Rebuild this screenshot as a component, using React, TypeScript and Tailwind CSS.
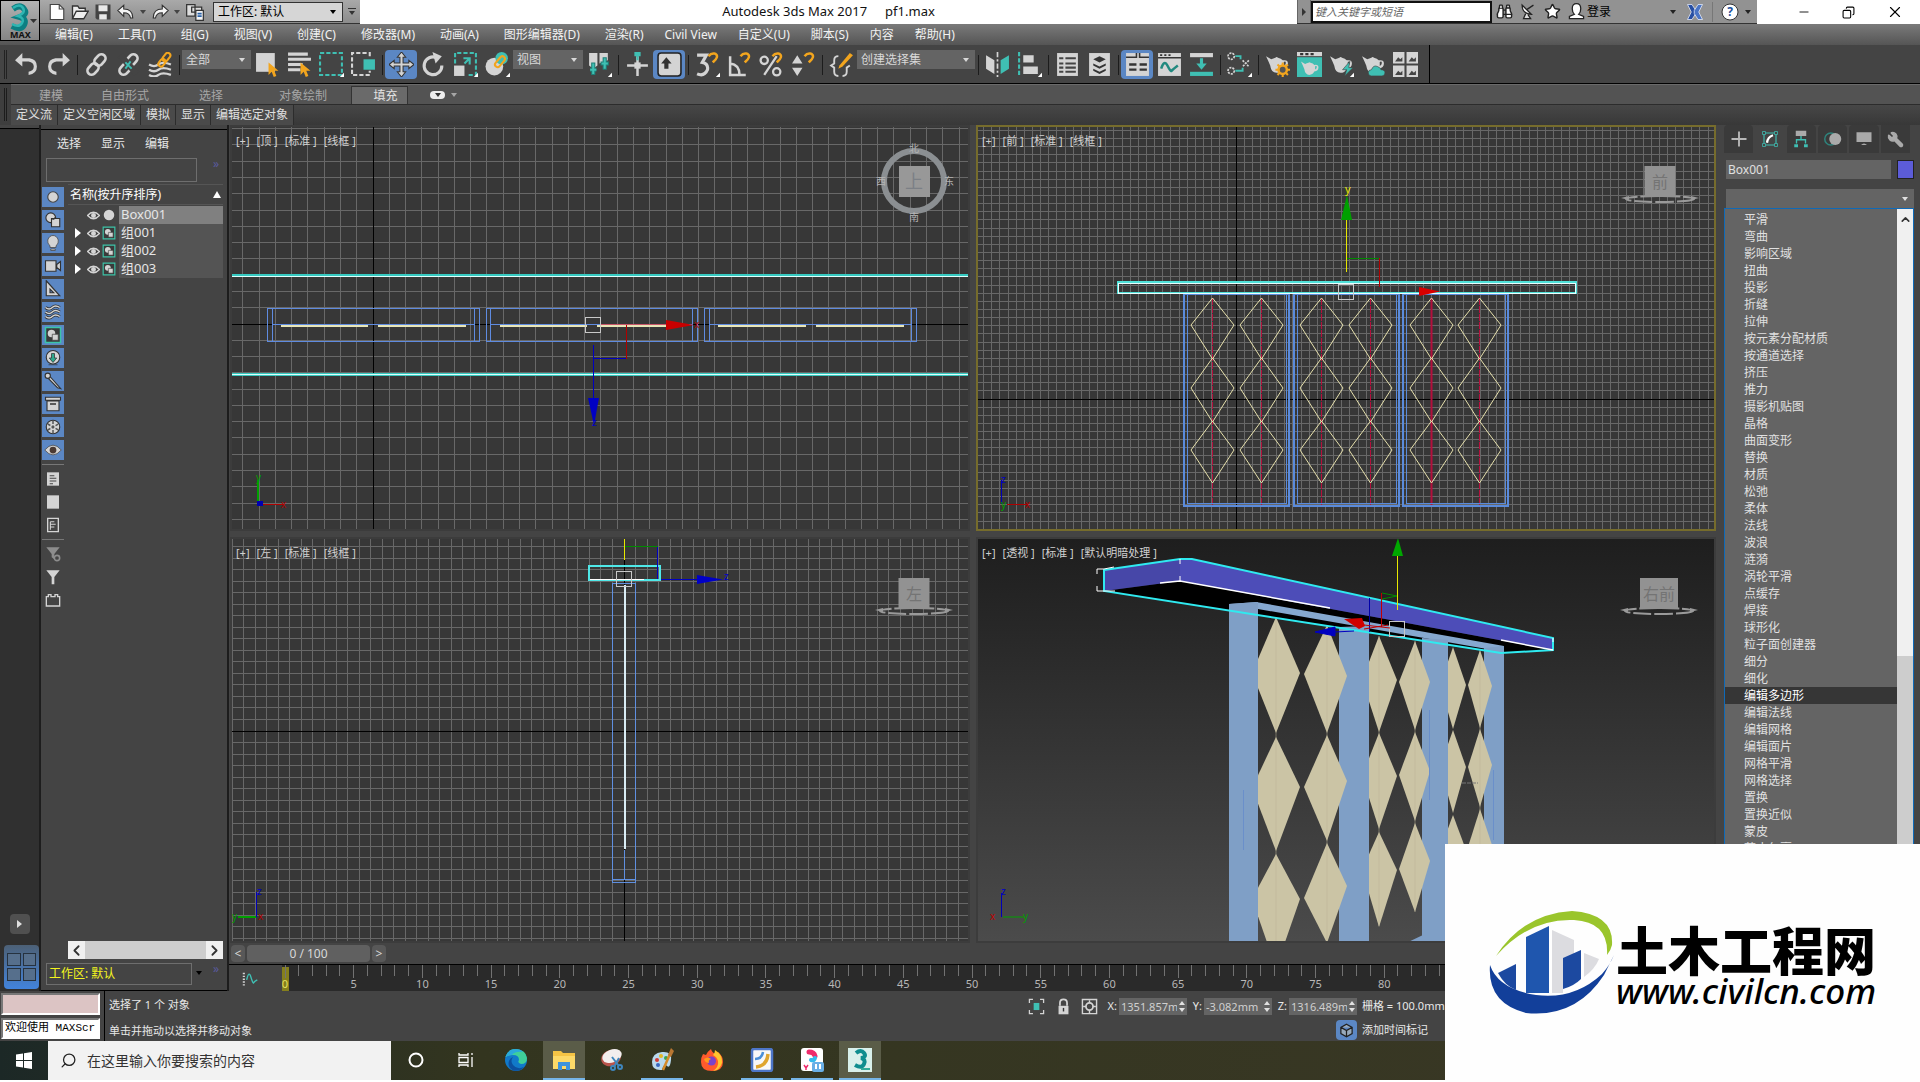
import type { ReactNode } from "react";
import {
  Binoculars,
  ChevronLeft,
  ChevronRight,
  ChevronUp,
  Copy,
  Minus,
  Search,
  Star,
  Wrench,
  X,
} from "lucide-react";

const L = "#d4d4d4";
const T = "#3fbfb3";
const Y = "#f2a51e";

function Ico({ children, size = 26 }: { children: ReactNode; size?: number }) {
  return (
    <svg width={size} height={size} viewBox="0 0 24 24" fill="none" aria-hidden="true" className="shrink-0">
      {children}
    </svg>
  );
}

// Small triangle in the corner of tools that open a flyout
const fly = <path d="M24 20v4h-4z" fill="#fff" />;
const magnet = <path d="M13 4c3-4 9-3 8 1-.5 2-3 4-4 5" stroke={Y} strokeWidth="2.4" />;
const cursor = <path d="M13 10v12l3-3 2 5 2.500-1-2-5h4z" fill={Y} />;
const teapot = (
  <path
    d="M1 4l5 3q2-1 4-1.500q1-1.500 2.500 0q3 .5 4.500 2.500q5-1 5 3q0 4-5 5q-2 4-6 4q-5 0-6-7q-2-5-4-9zM18 9.500v4q2-1 2-3t-2-1z"
    fill={L}
    fillRule="evenodd"
  />
);
const link = (
  <g stroke={L} strokeWidth="2.600">
    <rect x="11" y="1.500" width="8" height="12" rx="4" transform="rotate(42 15 8)" />
    <rect x="5" y="10.500" width="8" height="12" rx="4" transform="rotate(42 9 16)" />
  </g>
);

const tools: Record<string, ReactNode> = {
  undo: <path d="M8 1v5h7q7 1 7 8t-8 8v-3q5-1 5-5t-5-5H8v5L1 8z" fill={L} />,
  redo: <path d="M16 1v5H9q-7 1-7 8t8 8v-3q-5-1-5-5t5-5h6v5l7-6z" fill={L} />,
  link,
  unlink: (
    <>
      {link}
      <path d="M4 3l16 18" stroke="#444" strokeWidth="6" />
      <path d="M9 10l6 6M9 16l5-7" stroke={T} strokeWidth="1.800" />
    </>
  ),
  bind: (
    <>
      <path d="M1 12q5 3 9 0t12 0M1 17q5 3 9 0t12 0M1 22q5 3 9 0t12 0" stroke={L} strokeWidth="2.200" />
      <g stroke={Y} strokeWidth="2">
        <rect x="15" y="0" width="5" height="9" rx="2.500" transform="rotate(38 17 5)" />
        <rect x="11" y="6" width="5" height="8" rx="2.500" transform="rotate(38 13 10)" />
      </g>
    </>
  ),
  pick: (
    <>
      <path d="M1 1h18v18H1z" fill={L} />
      {cursor}
    </>
  ),
  pickName: (
    <>
      <path d="M1 2h19M1 7h22M1 12h14M1 17h12" stroke={L} strokeWidth="3" />
      {cursor}
    </>
  ),
  region: (
    <>
      <path d="M1 1h21v21H1z" stroke={T} strokeWidth="2" strokeDasharray="4 2" />
      {fly}
    </>
  ),
  crossing: (
    <>
      <path d="M18 4V1H1v21h17v-4" stroke={L} strokeWidth="2" strokeDasharray="4 2" />
      <path d="M12 7h11v10H12z" fill={T} />
    </>
  ),
  move: <path d="M12 0l4 5h-2.500v5.500H19V8l5 4-5 4v-2.500h-5.500V19H16l-4 5-4-5h2.500v-5.500H5V16l-5-4 5-4v2.500h5.500V5H8z" fill={L} stroke="#333" />,
  rotate: (
    <>
      <path d="M15 5.500A8.500 8.500 0 1 0 20 13" stroke={L} strokeWidth="3" />
      <path d="M11 0l9 4-6 7z" fill={L} />
    </>
  ),
  scale: (
    <>
      <path d="M2 11V1h20v21h-9" stroke={T} strokeWidth="2" strokeDasharray="4 2" />
      <path d="M1 13h10v10H1z" fill={L} />
      <path d="M10 6h6v6M16 6l-5 5" stroke={T} strokeWidth="2" />
      {fly}
    </>
  ),
  place: (
    <>
      <circle cx="9" cy="14" r="8.500" fill={L} />
      <circle cx="16" cy="6" r="6" fill={T} />
      <rect x="12" y="3" width="5" height="12" rx="2.500" transform="rotate(40 14 9)" stroke={Y} strokeWidth="2" />
      {fly}
    </>
  ),
  pivot: (
    <>
      <path d="M2 1h8v12l-4 3-4-3zM12 1h8v7l-8 3z" fill={L} />
      <path d="M6 10v12M3 17h6M17 5v12M13 11h8" stroke="#1f7f78" strokeWidth="4" />
      <path d="M6 11v10M3 17h6M17 6v10M14 11h6" stroke={T} strokeWidth="2" />
      {fly}
    </>
  ),
  manipulate: (
    <>
      <path d="M12 4v19M2 13h20" stroke={L} strokeWidth="2.400" />
      <path d="M9 10h6v6H9z" fill={L} />
      <path d="M9 0h6v4h-2v4h-2V4H9z" fill={T} />
    </>
  ),
  keyboard: (
    <>
      <rect x="1" y="1" width="22" height="22" rx="3" fill={L} stroke="#222" strokeWidth="1.500" />
      <path d="M9 5l5 6h-3v5H7v-5H4z" fill="#333" />
    </>
  ),
  snap3: (
    <>
      <path d="M2 3h9L7 10q6 1 5 7-3 7-10 4" stroke={L} strokeWidth="3" />
      {magnet}
      {fly}
    </>
  ),
  snapAngle: (
    <>
      <path d="M3 4v18h15M3 11q9 1 9 11" stroke={L} strokeWidth="2.400" />
      {magnet}
    </>
  ),
  snapPercent: (
    <>
      <circle cx="5" cy="8" r="3.500" stroke={L} strokeWidth="2.200" />
      <circle cx="17" cy="19" r="3.500" stroke={L} strokeWidth="2.200" />
      <path d="M17 4L5 22" stroke={L} strokeWidth="2.200" />
      {magnet}
    </>
  ),
  snapSpinner: (
    <>
      <path d="M6 3l5 8H1zM6 23l5-8H1z" fill={L} />
      {magnet}
    </>
  ),
  sets: (
    <>
      <path d="M9 4Q5 4 5 8v3l-3 2 3 2v4q0 4 4 4M13 23q4 0 4-4v-4l3-2" stroke={L} strokeWidth="1.800" />
      <path d="M10 13L20 1l3 2-10 11-4 2z" fill={Y} />
    </>
  ),
  mirror: (
    <>
      <path d="M1 3l8 5v13l-8-5z" fill={L} />
      <path d="M12 0v24" stroke={L} strokeWidth="1.600" strokeDasharray="5 2 2 2" />
      <path d="M23 3l-8 5v13l8-5z" fill={T} />
    </>
  ),
  align: (
    <>
      <path d="M2 0v24" stroke={T} strokeWidth="2" strokeDasharray="4 2" />
      <path d="M6 3h10v7H6zM6 14h14v7H6z" fill={L} />
      {fly}
    </>
  ),
  layerList: (
    <>
      <path d="M2 1h20v22H2z" fill={L} />
      <path d="M4 6h4M10 6h10M4 11h4M10 11h10M4 15h4M10 15h10M4 19h4M10 19h10" stroke="#444" strokeWidth="2" />
    </>
  ),
  layers: (
    <>
      <path d="M2 1h20v22H2z" fill={L} />
      <path d="M12 4l6 3-6 3-6-3zM6 11l6 3 6-3v2l-6 3-6-3zM6 16l6 3 6-3v2l-6 3-6-3z" fill="#333" />
    </>
  ),
  ribbon: (
    <>
      <path d="M1 1h22v22H1z" fill={L} />
      <path d="M1 5h10V1M14 1v4h9" stroke="#333" strokeWidth="1.500" />
      <path d="M4 12h7M14 12h7M4 17h7M14 17h7" stroke="#333" strokeWidth="2.200" />
    </>
  ),
  curve: (
    <>
      <path d="M1 1h22v22H1z" fill={L} />
      <path d="M1 5.500h22M3 3h2M7 3h2M11 3h2" stroke="#333" strokeWidth="1.500" />
      <path d="M4 16q3-9 6-3t4 5 6-5" stroke="#21897f" strokeWidth="2.400" />
    </>
  ),
  schematic: (
    <>
      <path d="M1 1h22v4H1z" fill={L} />
      <path d="M1 19h22v4H1z" fill={T} />
      <path d="M12 6v6" stroke={T} strokeWidth="3" />
      <path d="M7 11h10l-5 6z" fill={T} />
    </>
  ),
  material: (
    <>
      <g stroke={L} strokeWidth="1.600" strokeDasharray="2 1">
        <circle cx="4" cy="4" r="3" />
        <circle cx="4" cy="18" r="3" />
        <path d="M15 8l6 6M21 8l-6 6" />
      </g>
      <path d="M8 4h5v3M8 18h7v-3" stroke={T} strokeWidth="1.800" />
      {fly}
    </>
  ),
  renderSetup: (
    <>
      {teapot}
      <circle cx="17" cy="17" r="4" fill="#555" stroke={Y} strokeWidth="2.400" />
      <path d="M17 10v3M17 21v3M10 17h3M21 17h3M12 12l2 2M20 20l2 2M22 12l-2 2M14 20l-2 2" stroke={Y} strokeWidth="2" />
    </>
  ),
  frame: (
    <>
      <path d="M0 0h24v4H0z" fill={L} />
      <path d="M3 2h3M8 2h3M13 2h3" stroke="#333" strokeWidth="2" />
      <path d="M0 5h24v19H0z" fill={T} />
      <g transform="translate(3 6) scale(.8)">{teapot}</g>
    </>
  ),
  render: (
    <>
      {teapot}
      <path d="M20 9l-7 8h4l-2 6 8-8h-4z" fill={T} stroke="#444" strokeWidth=".6" />
      {fly}
    </>
  ),
  cloud: (
    <>
      {teapot}
      <path d="M10 23q-3 0-3-3t3-3q2-5 6-3t3 3q4 0 4 3t-3 3z" fill={T} stroke="#444" strokeWidth=".6" />
    </>
  ),
  gallery: (
    <>
      <path d="M0 0h11v11H0zM13 0h11v11H13zM0 13h11v11H0zM13 13h11v11H13z" fill={L} />
      <path d="M2 9l3-4 2 2 2-2v4zM15 9l3-4 2 2 2-2v4zM2 22l3-4 2 2 2-2v4zM15 22l3-4 2 2 2-2v4z" fill="#444" />
    </>
  ),
};

function Tool({ name, label, on }: { name: string; label: string; on?: boolean }) {
  return (
    <button
      type="button"
      title={label}
      aria-label={label}
      className={`flex h-[29px] w-8 shrink-0 items-center justify-center rounded-sm ${on ? "bg-[#5b87c4]" : ""}`}
    >
      <Ico size={25}>{tools[name]}</Ico>
    </button>
  );
}

function Sep() {
  return (
    <div className="flex h-[29px] w-1.5 shrink-0 items-center justify-center">
      <div className="h-5 w-px bg-[#1c1c1c]" />
    </div>
  );
}

function Caret({ className = "" }: { className?: string }) {
  return (
    <svg width="6" height="4" viewBox="0 0 6 4" className={`pointer-events-none shrink-0 ${className}`} aria-hidden="true">
      <path d="M0 0h6L3 4z" fill="currentColor" />
    </svg>
  );
}

function Combo({ label, value, className }: { label: string; value: string; className: string }) {
  return (
    <div className={`relative shrink-0 ${className}`}>
      <select aria-label={label} className="h-full w-full appearance-none bg-transparent px-1 outline-none">
        <option>{value}</option>
      </select>
      <Caret className="absolute top-1/2 right-1.5 -translate-y-1/2" />
    </div>
  );
}

const mainMenu = [
  ["编辑(E)", "工具(T)", "组(G)", "视图(V)", "创建(C)", "修改器(M)", "动画(A)", "图形编辑器(D)", "渲染(R)"],
  ["Civil View", "自定义(U)", "脚本(S)", "内容", "帮助(H)"],
];

function Header() {
  return (
    <header className="flex bg-gradient-to-b from-[#a8a8a8] to-[#555]">
      <button
        type="button"
        aria-label="应用程序菜单"
        className="relative z-10 h-[41px] w-10 shrink-0 border border-black bg-gradient-to-b from-[#b4b4b4] to-[#858585]"
      >
        <svg width="38" height="39" viewBox="0 0 38 39" aria-hidden="true">
          <path d="M12 8q7-5 11 0t-4 8q7 2 4 8t-12 1" fill="none" stroke="#0c7f82" strokeWidth="6" />
          <path d="M12 7q7-5 10 0t-5 8q7 2 4 7t-10 1" fill="none" stroke="#2fb5b2" strokeWidth="2.500" />
          <path d="M29 18h7l-3.500 4z" fill="#333" />
          <text x="9" y="37" fontSize="9" fontWeight="700" fill="#111">MAX</text>
        </svg>
      </button>

      <div className="min-w-0 flex-1">
        <div className="flex h-6 bg-white text-[#222]">
          <div className="flex w-80 shrink-0 items-center border-b border-[#333] bg-gradient-to-b from-[#a9a9a9] to-[#8c8c8c]">
            <div className="flex flex-1 items-center justify-between px-2 text-[#444]">
              <Ico size={18}>
                <path d="M3 2h12l6 6v14H3z" fill="#fff" stroke="#444" strokeWidth="1.500" />
                <path d="M15 2v6h6" stroke="#444" strokeWidth="1.500" />
              </Ico>
              <Ico size={18}>
                <path d="M2 21V4h7l2 3h8v4M2 21l5-10h16l-6 10z" fill="#eee" stroke="#333" strokeWidth="1.800" />
              </Ico>
              <Ico size={18}>
                <path d="M2 2h20v20H4l-2-2z" fill="#444" />
                <path d="M6 3h12v8H6zM7 15h10v7H7z" fill="#e8e8e8" />
              </Ico>
              <Ico size={18}>
                <path d="M9 3v5q12 0 12 12h-3q-1-7-9-7v5L1 10z" fill="#f4f4f4" stroke="#333" strokeWidth="1.500" />
              </Ico>
              <Caret />
              <Ico size={18}>
                <path d="M15 3v5Q3 8 3 20h3q1-7 9-7v5l8-8z" fill="#f4f4f4" stroke="#333" strokeWidth="1.500" />
              </Ico>
              <Caret />
              <Ico size={20}>
                <path d="M2 3h10v14H2zM8 6h12v6H8z" fill="#ddd" stroke="#333" strokeWidth="1.500" />
                <path d="M13 10h9v12h-9z" fill="#f4f4f4" stroke="#333" strokeWidth="1.500" />
                <path d="M15 14h5M15 17h5" stroke="#2a62a8" strokeWidth="2" />
              </Ico>
            </div>
            <Combo
              label="工作区"
              value="工作区: 默认"
              className="h-5 w-[130px] border border-[#333] bg-[#d6d6d6] text-xs text-black"
            />
            <div className="flex w-[17px] flex-col items-center gap-0.5 text-[#333]">
              <div className="h-px w-2 bg-[#333]" />
              <Caret />
            </div>
          </div>

          <h1 className="flex flex-1 items-center justify-center gap-[18px] text-[13px] text-[#111]">
            <span>Autodesk 3ds Max 2017</span>
            <span>pf1.max</span>
          </h1>

          <div className="flex w-[460px] shrink-0 items-center border-b border-[#333] bg-[#929292] text-xs">
            <div className="flex h-full w-3.5 items-center justify-center border-x border-[#666]">
              <span className="border-y-4 border-l-4 border-y-transparent border-l-[#333]" />
            </div>
            <input
              aria-label="搜索"
              placeholder="键入关键字或短语"
              className="h-[22px] w-[181px] border-2 border-[#111] bg-white px-0.5 text-[11px] italic outline-none placeholder:text-[#666]"
            />
            <div className="flex items-center gap-[7px] pl-1">
              <Binoculars size={17} className="fill-white text-[#222]" strokeWidth={2} />
              <Ico size={17}>
                <path d="M3 3q0 12 13 13z" fill="#fff" stroke="#222" strokeWidth="1.800" />
                <path d="M10 9l9-6M8 15l-3 7h10l-4-6" fill="#ddd" stroke="#222" strokeWidth="1.800" />
              </Ico>
              <Star size={17} className="fill-white text-[#222]" strokeWidth={2} />
              <Ico size={17}>
                <path d="M12 1q6 0 6 7 0 5-3 8l7 3v3H2v-3l7-3q-3-3-3-8 0-7 6-7z" fill="#fff" stroke="#222" strokeWidth="1.800" />
              </Ico>
            </div>
            <button type="button" className="ml-0.5 text-black">登录</button>
            <Caret className="ml-auto" />
            <svg width="18" height="18" viewBox="0 0 24 24" className="ml-2.5 mr-2" aria-hidden="true">
              <path d="M2 2h6l5 8v4l-5 8H2l5-10z" fill="#274fa3" stroke="#e8eefc" />
              <path d="M22 2h-6l-5 8v4l5 8h6l-5-10z" fill="#4a74c4" stroke="#e8eefc" />
            </svg>
            <div className="h-5 w-px bg-[#777]" />
            <svg width="18" height="18" viewBox="0 0 18 18" className="ml-2" aria-label="帮助">
              <circle cx="9" cy="9" r="8" fill="#fff" stroke="#333" />
              <text x="9" y="13" fontSize="12" fontWeight="700" textAnchor="middle" fill="#1d4f9c">?</text>
            </svg>
            <Caret className="mx-1.5" />
          </div>

          <div className="flex w-[163px] shrink-0 items-center justify-around pl-6 text-black">
            <button type="button" aria-label="最小化"><Minus size={14} strokeWidth={1.5} /></button>
            <button type="button" aria-label="还原"><Copy size={13} strokeWidth={2} className="-scale-x-100" /></button>
            <button type="button" aria-label="关闭"><X size={18} strokeWidth={1.5} /></button>
          </div>
        </div>

        <nav className="flex h-[21px] items-center gap-[21px] pl-[15px] text-xs text-[#f2f2f2]">
          <div className="flex gap-[25px]">
            {mainMenu[0].map((m) => <button key={m} type="button">{m}</button>)}
          </div>
          <div className="flex gap-[21px]">
            {mainMenu[1].map((m) => <button key={m} type="button">{m}</button>)}
          </div>
        </nav>
      </div>
    </header>
  );
}

function Toolbar() {
  return (
    <div className="flex h-[39px] border-b border-black bg-[#444] text-xs text-[#d8d8d8]">
      <div className="flex items-start border-r border-black pt-[5px] pr-2 pl-1">
        <div className="mr-[3px] h-[29px] w-[3px] border-x border-[#222]" />
        <Tool name="undo" label="撤消" />
        <Tool name="redo" label="重做" />
        <Sep />
        <Tool name="link" label="链接" />
        <Tool name="unlink" label="断开链接" />
        <Tool name="bind" label="绑定到空间扭曲" />
        <Sep />
        <Combo label="选择过滤器" value="全部" className="h-[19px] w-[69px] bg-[#646464]" />
        <Tool name="pick" label="选择对象" />
        <Tool name="pickName" label="按名称选择" />
        <Tool name="region" label="矩形选择区域" />
        <Tool name="crossing" label="窗口/交叉" />
        <Sep />
        <Tool name="move" label="选择并移动" on />
        <Tool name="rotate" label="选择并旋转" />
        <Tool name="scale" label="选择并缩放" />
        <Tool name="place" label="选择并放置" />
        <Combo label="参考坐标系" value="视图" className="h-[19px] w-[70px] bg-[#646464]" />
        <Tool name="pivot" label="使用轴点中心" />
        <Sep />
        <Tool name="manipulate" label="选择并操纵" />
        <Tool name="keyboard" label="键盘快捷键覆盖" on />
        <Sep />
        <Tool name="snap3" label="捕捉开关" />
        <Tool name="snapAngle" label="角度捕捉" />
        <Tool name="snapPercent" label="百分比捕捉" />
        <Tool name="snapSpinner" label="微调器捕捉" />
        <Sep />
        <Tool name="sets" label="编辑命名选择集" />
        <Combo label="命名选择集" value="创建选择集" className="h-[19px] w-[118px] bg-[#646464]" />
        <Sep />
        <Tool name="mirror" label="镜像" />
        <Tool name="align" label="对齐" />
        <Sep />
        <Tool name="layerList" label="场景资源管理器" />
        <Tool name="layers" label="层资源管理器" />
        <Sep />
        <Tool name="ribbon" label="显示功能区" on />
        <Tool name="curve" label="曲线编辑器" />
        <Tool name="schematic" label="图解视图" />
        <Sep />
        <Tool name="material" label="材质编辑器" />
        <Sep />
        <Tool name="renderSetup" label="渲染设置" />
        <Tool name="frame" label="渲染帧窗口" />
        <Tool name="render" label="渲染产品" />
        <Tool name="cloud" label="在线渲染" />
        <Tool name="gallery" label="渲染库" />
      </div>
    </div>
  );
}

function Ribbon() {
  return (
    <div className="flex h-[41px] bg-[#3e3e3e] text-xs">
      <div className="mx-1 my-1 w-[3px] border-x border-[#1c1c1c]" />
      <div className="flex min-w-0 flex-1 flex-col">
        <div className="flex h-[21px] items-end border-t border-b border-t-[#6a6a6a] border-b-[#2c2c2c] bg-[#535353] text-[#a6a6a6]">
          <button type="button" className="w-20">建模</button>
          <button type="button" className="w-[68px]">自由形式</button>
          <button type="button" className="w-[104px]">选择</button>
          <button type="button" className="mr-6 w-16 text-right">对象绘制</button>
          <button type="button" className="h-[18px] w-[57px] border border-b-0 border-[#333] bg-[#6a6a6a] pl-3 text-[#e4e4e4]">填充</button>
          <button type="button" aria-label="功能区选项" className="ml-[22px] flex h-full items-center gap-1.5">
            <span className="flex h-2 w-[15px] items-center justify-center rounded-sm bg-[#eee] text-[#333]"><Caret /></span>
            <Caret />
          </button>
        </div>
        <div className="flex h-5 items-center bg-gradient-to-b from-[#474747] to-[#383838] text-[#e0e0e0]">
          {["定义流", "定义空闲区域", "模拟", "显示", "编辑选定对象"].map((t) => (
            <button key={t} type="button" className="h-full border-r border-[#2c2c2c] bg-[#4a4a4a] px-[5px]">{t}</button>
          ))}
        </div>
      </div>
    </div>
  );
}

const groupMark = (
  <>
    <path d="M2 2h20v20H2z" stroke="#3cc4a8" strokeWidth="2" fill="#3a3a3a" />
    <circle cx="10" cy="10" r="5" fill={L} />
    <path d="M11 11h8v8h-8z" fill={L} stroke="#444" />
  </>
);

const filters: ReactNode[] = [
  <circle cx="12" cy="12" r="7" fill={L} stroke="#444" strokeWidth="1.500" />,
  <g stroke="#333" strokeWidth="1.500" fill={L}>
    <circle cx="9" cy="9" r="6.500" />
    <path d="M10 10h11v11H10z" />
    <path d="M11 11q4 0 4-3" fill="none" />
  </g>,
  <path d="M8 16q-4-4-3-8 2-6 7-6t7 6q1 4-3 8v2H8zM9 20h6v2H9z" fill={L} stroke="#444" />,
  <path d="M2 5h14v14H2zM17 10l5-4v12l-5-4z" fill={L} stroke="#333" strokeWidth="1.500" />,
  <path d="M3 1l18 20H3zM8 12v5h5z" fill={L} stroke="#333" strokeWidth="1.500" fillRule="evenodd" />,
  <>
    <path d="M2 6q5 4 9 0t10 0M2 12q5 4 9 0t10 0M2 18q5 4 9 0t10 0" stroke="#333" strokeWidth="4" />
    <path d="M2 6q5 4 9 0t10 0M2 12q5 4 9 0t10 0M2 18q5 4 9 0t10 0" stroke={L} strokeWidth="2" />
  </>,
  groupMark,
  <>
    <circle cx="12" cy="11" r="9" fill={L} stroke="#333" strokeWidth="1.500" />
    <path d="M10 6h4v6h3l-5 6-5-6h3zM6 21h12" fill="#2fa88c" stroke="#333" />
  </>,
  <>
    <path d="M8 6l14 16-4-1L6 9z" fill={L} stroke="#333" strokeWidth="1.500" />
    <circle cx="5" cy="5" r="3.500" fill={L} stroke="#333" strokeWidth="1.500" />
  </>,
  <>
    <path d="M2 3h20v4H2zM4 8h16v13H4z" fill={L} stroke="#333" strokeWidth="1.500" />
    <path d="M8 12h8" stroke="#333" strokeWidth="2" />
  </>,
  <>
    <circle cx="12" cy="12" r="9" fill={L} stroke="#333" strokeWidth="1.500" />
    <path d="M12 4v16M5 8l14 8M5 16l14-8" stroke="#555" strokeWidth="2" strokeDasharray="4 2" />
  </>,
  <>
    <path d="M1 12q11-13 22 0-11 13-22 0z" fill={L} stroke="#444" />
    <circle cx="12" cy="12" r="4.500" fill="#4b3a33" />
  </>,
];

const listTools: ReactNode[][] = [
  [
    <><path d="M3 2h18v20H3z" fill={L} /><path d="M7 7h7M7 11h10M7 15h10M7 19h5" stroke="#444" strokeWidth="1.600" /></>,
    <path d="M3 2h18v20H3z" fill={L} />,
    <><path d="M4 2h16v20H4z" stroke={L} strokeWidth="2" /><path d="M8 7h6M8 11h8M8 15h6M8 7v12" stroke={L} strokeWidth="1.600" /></>,
  ],
  [
    <><path d="M2 2h20l-8 10v8l-4-3v-5z" fill="#8d8d8d" /><circle cx="18" cy="18" r="4" stroke="#8d8d8d" strokeWidth="2.400" /></>,
    <path d="M2 2h20l-8 10v11h-4V12z" fill={L} />,
    <path d="M2 7h3V4h4v3h6V4h4v3h3v14H2z" stroke={L} strokeWidth="2" />,
  ],
];

const nodes = [
  { name: "Box001", group: false },
  { name: "组001", group: true },
  { name: "组002", group: true },
  { name: "组003", group: true },
];

function Explorer() {
  return (
    <aside className="flex w-[190px] shrink-0 flex-col border-x-2 border-[#1d1d1d] bg-[#444] text-xs text-[#e6e6e6]">
      <div className="mt-1 h-px bg-black" />
      <div className="flex gap-5 pt-1.5 pl-4">
        <button type="button">选择</button>
        <button type="button">显示</button>
        <button type="button">编辑</button>
      </div>
      <div className="mt-1.5 flex items-start justify-between pr-2 pl-[5px]">
        <input aria-label="查找" className="h-6 w-[151px] border border-[#6e6e6e] bg-transparent px-1 outline-none" />
        <span className="leading-3 text-[#5a5a9e]">»</span>
      </div>

      <div className="flex min-h-0 flex-1 pl-px">
        <div className="flex w-[26px] shrink-0 flex-col items-start pt-[5px]">
          <div className="flex flex-col gap-[3px]">
            {filters.map((f, i) => (
              <button key={i} type="button" aria-label={`过滤器 ${i + 1}`} className="flex h-5 w-[22px] items-center justify-center bg-[#5b87c4]">
                <Ico size={18}>{f}</Ico>
              </button>
            ))}
          </div>
          {listTools.map((set, i) => (
            <div key={i} className="mt-1 flex w-[22px] flex-col gap-[3px] border-t border-[#777] pt-1">
              {set.map((f, j) => (
                <button key={j} type="button" aria-label={`列表工具 ${i * 3 + j + 1}`} className="flex h-5 items-center justify-center">
                  <Ico size={16}>{f}</Ico>
                </button>
              ))}
            </div>
          ))}
        </div>

        <div className="mr-1 flex flex-1 flex-col">
          <div className="mt-0.5 mb-px flex h-[21px] items-center justify-between border-y border-[#555] px-0.5 text-white">
            <span>名称(按升序排序)</span>
            <svg width="8" height="7" viewBox="0 0 8 7" aria-hidden="true"><path d="M4 0l4 7H0z" fill="#fff" /></svg>
          </div>
          <ul>
            {nodes.map((n, i) => (
              <li key={n.name} className="flex h-[18px] items-center">
                <span className="flex w-[19px] justify-center">
                  {n.group && <span className="border-y-[5px] border-l-[6px] border-y-transparent border-l-white" />}
                </span>
                <span className="mr-0.5 flex w-[13px] items-center">
                  <Ico size={13}>
                    <path d="M1 12q11-12 22 0-11 12-22 0z" stroke={L} strokeWidth="2.500" />
                    <circle cx="12" cy="12" r="4.500" fill={L} />
                  </Ico>
                </span>
                <Ico size={14}>{n.group ? groupMark : <circle cx="12" cy="12" r="9" fill={L} />}</Ico>
                <span className={`ml-[3px] flex h-full flex-1 items-center pl-0.5 text-[13px] ${i === 0 ? "bg-[#808080]" : "bg-[#545454]"}`}>
                  {n.name}
                </span>
              </li>
            ))}
          </ul>
          <div className="mt-auto flex h-[18px] items-stretch bg-[#f0f0f0] text-[#333]">
            <button type="button" aria-label="向左滚动"><ChevronLeft size={17} strokeWidth={2.5} /></button>
            <div className="flex-1 bg-[#cdcdcd]" />
            <button type="button" aria-label="向右滚动"><ChevronRight size={17} strokeWidth={2.5} /></button>
          </div>
        </div>
      </div>

      <div className="flex h-8 items-start gap-1 border-b border-black pt-1 pr-2 pl-[5px]">
        <button type="button" className="h-[22px] w-[146px] border border-[#6e6e6e] px-0.5 text-left text-[#f4f41e]">工作区: 默认</button>
        <Caret className="mt-2 text-black" />
        <span className="ml-auto leading-3 text-[#5a5a9e]">»</span>
      </div>
    </aside>
  );
}

const snap = (n: number) => Math.floor(n) + 0.5;

function gridPath(ax: number, ay: number, step: number) {
  let d = "";
  for (let i = -170; i <= 170; i++) {
    if (i === 0) continue;
    d += `M${snap(ax + i * step)} -800V2200M-800 ${snap(ay + i * step)}H3400`;
  }
  return d;
}

// Scenes are drawn in window coordinates; `at` is where the viewport starts
function Viewport({
  tags,
  at,
  axis,
  step = 0,
  active,
  children,
}: {
  tags: string[];
  at: [number, number];
  axis?: [number, number];
  step?: number;
  active?: boolean;
  children: ReactNode;
}) {
  return (
    <section
      className={`relative min-h-0 min-w-0 overflow-hidden border-2 ${active ? "border-[#766c2c]" : "border-[#3c3c3c]"} ${
        axis ? "bg-[#373737]" : "bg-gradient-to-b from-[#1e1e1e] via-[#343434] to-[#4b4b4b]"
      }`}
    >
      <svg className="absolute inset-0 h-full w-full" fill="none" aria-hidden="true">
        <g transform={`translate(${-at[0]} ${-at[1]})`}>
          {axis && (
            <g shapeRendering="crispEdges">
              <path d={gridPath(axis[0], axis[1], step)} stroke="#686868" />
              <path d={`M${snap(axis[0])} -800V2200M-800 ${snap(axis[1])}H3400`} stroke="#000" />
            </g>
          )}
          {children}
        </g>
      </svg>
      <div className="relative flex gap-[7px] pt-1.5 pl-1 text-[11px] leading-4 text-[#d0d0d0]">
        {tags.map((t) => <button key={t} type="button">{t}</button>)}
      </div>
    </section>
  );
}

function Cube({ x, y, face, w = 31 }: { x: number; y: number; face: string; w?: number }) {
  return (
    <g>
      <ellipse cx={x} cy={y + 17} rx="34" ry="3" stroke="#9a9a9a" strokeWidth="2" strokeDasharray="18 3" />
      <path d={`M${x - 39} ${y + 16}l8-2v4zM${x + 39} ${y + 16}l-8-2v4z`} fill="#9a9a9a" />
      <rect x={x - w / 2} y={y - 16} width={w} height="31" fill="#929292" />
      <text x={x} y={y + 6} fontSize="16" textAnchor="middle" fill="#747474">{face}</text>
    </g>
  );
}

function TopScene() {
  const frames = [
    [267, 272, 474, 479],
    [486, 490, 692, 697],
    [704, 709, 911, 916],
  ];
  const bars = [[281, 368], [378, 466], [500, 587], [597, 668], [718, 806], [816, 904]];
  return (
    <>
      <g shapeRendering="crispEdges">
        <path d="M0 275.500H2400M0 374.500H2400" stroke="#35c9c0" strokeWidth="3" />
        <path d="M0 276H2400M0 374H2400" stroke="#dffffb" />
        {frames.map(([a, b, c, d]) => (
          <path key={a} d={`M${a}.500 308.500H${d}.500V341.500H${a}.500zM${b}.500 308V341M${c}.500 308V341M${b} 324.500H${c}`} stroke="#5f8be0" />
        ))}
        {bars.map(([a, b]) => <path key={a} d={`M${a} 326H${b}`} stroke="#e8e6b8" strokeWidth="2" />)}
        <path d="M585.500 317.500h15v15h-15z" stroke="#c8c8c8" />
        <path d="M601 324.500H668" stroke="#c8566a" />
        <path d="M626.500 325V359" stroke="#b00000" />
        <path d="M593.500 345V398M593 358.500H626" stroke="#0000c0" />
      </g>
      <path d="M666 320l28 5-28 5z" fill="#c80000" />
      <path d="M588 398h11l-5 27z" fill="#0000c4" />
      <text x="694" y="328" fontSize="10" fill="#b00000">x</text>
      <text x="592" y="426" fontSize="10" fill="#0000c4">z</text>

      <path d="M258 480V503" stroke="#00a000" strokeWidth="2" />
      <path d="M258 504.500H284" stroke="#b00000" />
      <path d="M257 501h6v5h-6z" fill="#0000b0" />
      <text x="256" y="481" fontSize="10" fill="#00a000">y</text>
      <text x="281" y="508" fontSize="10" fill="#b00000">x</text>

      <circle cx="914" cy="181" r="30" stroke="#8b8f92" strokeWidth="6" />
      <rect x="899" y="166" width="31" height="31" fill="#989898" />
      <text x="914" y="188" fontSize="18" textAnchor="middle" fill="#7c8086">上</text>
      <g fontSize="10" textAnchor="middle" fill="#b4b4b4">
        <text x="914" y="152">北</text>
        <text x="914" y="221">南</text>
        <text x="881" y="185">西</text>
        <text x="949" y="185">东</text>
      </g>
    </>
  );
}

function FrontScene() {
  const frames = [[1184, 1289], [1294, 1399], [1403, 1508]];
  const centers = [1212, 1261, 1321, 1370, 1431, 1479];
  const rows = [[298, 325, 359], [358, 388, 422], [421, 450, 483]];
  return (
    <>
      {centers.map((c) => (
        <g key={c}>
          <path
            d={`M${c}.500 298V506`}
            stroke="#b40f3c"
            strokeWidth={c === 1431 ? 2 : 1}
            strokeDasharray={c === 1431 ? undefined : "7 1"}
          />
          {rows.map(([a, b, d]) => (
            <path key={a} d={`M${c + 0.5} ${a}L${c + 22} ${b}L${c + 0.5} ${d}L${c - 21} ${b}z`} stroke="#e6e0ac" />
          ))}
        </g>
      ))}
      <g shapeRendering="crispEdges">
        {frames.map(([a, b]) => (
          <g key={a}>
            <path d={`M${a} 294H${b}V506H${a}z`} stroke="#5a8bdc" strokeWidth="2" />
            <path d={`M${a + 3}.500 295V503.500H${b - 3}.500V295`} stroke="#5a8bdc" />
          </g>
        ))}
        <path d="M1118 282H1576V293H1118z" stroke="#4fe0d8" strokeWidth="2" />
        <path d="M1118.500 283.500H1575.500V293.500H1118.500z" stroke="#eaffff" />
        <path d="M1346.500 220V272" stroke="#e8e800" />
        <path d="M1347 258.500H1379" stroke="#008a00" />
        <path d="M1379.500 258V287" stroke="#b00000" />
        <path d="M1338.500 284.500h15v15h-15z" stroke="#c8c8c8" />
      </g>
      <path d="M1341 220h11l-5-25z" fill="#00a000" />
      <path d="M1419 287l21 4.500-21 4.500z" fill="#d80000" />
      <text x="1345" y="193" fontSize="11" fill="#e8e800">y</text>

      <path d="M1001.500 480V504" stroke="#0000b8" />
      <path d="M1007 504.500H1028" stroke="#b00000" />
      <text x="1001" y="483" fontSize="10" fill="#0000c8">z</text>
      <text x="1001" y="508" fontSize="10" fill="#00a000">y</text>
      <text x="1025" y="508" fontSize="10" fill="#b00000">x</text>
      <Cube x={1660} y={182} face="前" />
    </>
  );
}

function LeftScene() {
  return (
    <>
      <g shapeRendering="crispEdges">
        <path d="M612.500 583V882M635.500 583V882M612 583.500H636M612 879.500H636M612 882.500H636M624.500 850V880" stroke="#5f8fe0" />
        <path d="M625 585V849" stroke="#d8ecf4" strokeWidth="2" />
        <path d="M589 566H660V580H589z" stroke="#4fe8e8" strokeWidth="2" />
        <path d="M590 579.500H644" stroke="#fff" />
        <path d="M624.500 539V560" stroke="#e8e800" />
        <path d="M625 546.500H658" stroke="#008a00" />
        <path d="M657.500 547V579M661 579.500H697" stroke="#0000c0" />
        <path d="M616.500 571.500h15v15h-15z" stroke="#c8c8c8" />
      </g>
      <path d="M697 575l26 4.500-26 4.500z" fill="#0000c8" />
      <text x="724" y="580" fontSize="10" fill="#0000c8">z</text>
      <path d="M256.500 892V917" stroke="#0000b8" />
      <path d="M238 917H256" stroke="#00a000" strokeWidth="2" />
      <text x="257" y="895" fontSize="10" fill="#0000c8">z</text>
      <text x="232" y="920" fontSize="10" fill="#00a000">y</text>
      <text x="258" y="920" fontSize="10" fill="#b00000">x</text>
      <Cube x={914} y={594} face="左" />
    </>
  );
}

// Each panel: left edge, centre, right edge, then top / left-mid / right-mid / bottom
const lattice = [
  [1252, 1276, 1300, [617, 673, 673, 733], [737, 788, 787, 851], [854, 899, 899, 968]],
  [1304, 1327, 1347, [625, 674, 676, 733], [735, 787, 781, 841], [843, 898, 886, 943]],
  [1362, 1379, 1397, [636, 680, 680, 732], [733, 776, 776, 829], [832, 870, 870, 927]],
  [1399, 1415, 1430, [641, 682, 682, 730], [732, 775, 771, 821], [823, 869, 861, 912]],
  [1440, 1453, 1466, [647, 685, 685, 729], [730, 767, 767, 813], [815, 850, 850, 890]],
  [1468, 1480, 1492, [650, 685, 686, 728], [729, 767, 765, 807], [809, 847, 845, 885]],
] as const;

function PerspectiveScene() {
  return (
    <>
      <path d="M1104 591L1180 581L1553 650L1501 653z" fill="#000" />
      <path d="M1229 604L1256 602L1504 646V652L1258 609z" fill="#86a8cf" />
      <path d="M1229 604L1258 602V960H1229z" fill="#7f9fc6" />
      <path d="M1339 627L1369 626V960H1339zM1422 638L1448 640V960H1422zM1484 648L1504 646V960H1484z" fill="#7f9fc6" />
      <path d="M1404 944L1423 935H1448L1436 944z" fill="#7f9fc6" />
      <clipPath id="openings">
        <path d="M1258 600H1348V960H1258zM1369 600H1431V960H1369zM1448 600H1493V960H1448z" />
      </clipPath>
      <g clipPath="url(#openings)" fill="#cbc4a5">
        {lattice.map(([l, c, r, ...rows]) =>
          rows.map(([a, ml, mr, b]) => <path key={`${c}-${a}`} d={`M${c} ${a}L${r} ${mr}L${c} ${b}L${l} ${ml}z`} />),
        )}
      </g>
      <path d="M1276 617V960M1327 625V943M1379 636V926M1415 641V912M1480 650V850" stroke="#b9b294" strokeWidth=".5" />
      <path d="M1243.500 790V850M1429.500 710V800M1493.500 770V840" stroke="#6a8fca" />
      <path d="M1462 783h16" stroke="#777" strokeDasharray="4 1" />

      <path d="M1104 570L1180 559V581L1104 591z" fill="#4747a8" />
      <path d="M1180 559L1192 559L1553 638V650L1180 581z" fill="#4d4db8" />
      <path d="M1104 570L1180 559H1192L1553 638V650L1501 653L1104 591z" stroke="#2feaf0" strokeWidth="2" />
      <path d="M1160 583L1180 581L1330 608M1501 640L1553 650" stroke="#fff" strokeWidth="1.500" />
      <path d="M1104 569h-7v5M1097 586v5h18M1180 559v5M1180 576v5M1553 638v4M1104 569l10-2" stroke="#fff" />

      <g shapeRendering="crispEdges">
        <path d="M1397.500 556V610" stroke="#e8e800" />
        <path d="M1381.500 593V627" stroke="#c00000" />
        <path d="M1369.500 598V632" stroke="#0000a8" />
        <path d="M1389.500 621.500h15v15h-15z" stroke="#c8c8c8" />
      </g>
      <path d="M1382 593l15 3-15 3" stroke="#008a00" />
      <path d="M1364 625L1390 628M1364 629L1388 625" stroke="#c00000" />
      <path d="M1392 556h11l-5-18z" fill="#00a800" />
      <path d="M1344 619l18-1 3 8-6 3z" fill="#d00000" />
      <path d="M1315 632l20-5v9zM1335 632L1354 631" fill="#0000c0" stroke="#0000c0" />

      <path d="M1001.500 893V917" stroke="#0000b8" />
      <path d="M1003 917H1024" stroke="#00a000" />
      <text x="1001" y="895" fontSize="10" fill="#0000c8">z</text>
      <text x="1023" y="920" fontSize="10" fill="#00a000">y</text>
      <text x="990" y="920" fontSize="10" fill="#c00000">x</text>
      <Cube x={1659} y={594} face="右前" w={38} />
    </>
  );
}

function TimeTrack() {
  const first = 3;
  const step = 13.74;
  const frames = Array.from({ length: 101 }, (_, i) => i);
  const labels = Array.from({ length: 17 }, (_, i) => i * 5);
  return (
    <div className="flex h-[27px] bg-[#444]">
      <button type="button" aria-label="打开迷你曲线编辑器" className="flex w-[53px] items-center border-t border-black pl-3">
        <Ico size={17}>
          <path d="M4 4v18" stroke={L} strokeWidth="3" strokeDasharray="2 2" />
          <path d="M8 14q3-14 6-4t4 8 5-4" stroke={T} strokeWidth="2" />
        </Ico>
      </button>
      <svg className="h-full min-w-0 flex-1 border-t border-black bg-[#2a2a2a]" aria-label="时间轴">
        <rect x="0" y="2" width="7" height="24" fill="#857f1c" />
        <path
          d={frames.map((f) => `M${snap(first + f * step)} 0v${f % 5 ? 11 : 13}`).join("")}
          stroke="#727272"
          shapeRendering="crispEdges"
        />
        {labels.map((f) => (
          <text key={f} x={first + f * step} y="23" fontSize="11" textAnchor="middle" fill={f ? "#b8b8b8" : "#e6e060"}>
            {f}
          </text>
        ))}
      </svg>
    </div>
  );
}

const modifiers = [
  "平滑", "弯曲", "影响区域", "扭曲", "投影", "折缝", "拉伸", "按元素分配材质", "按通道选择", "挤压", "推力",
  "摄影机贴图", "晶格", "曲面变形", "替换", "材质", "松弛", "柔体", "法线", "波浪", "涟漪", "涡轮平滑", "点缓存",
  "焊接", "球形化", "粒子面创建器", "细分", "细化", "编辑多边形", "编辑法线", "编辑网格", "编辑面片", "网格平滑",
  "网格选择", "置换", "置换近似", "蒙皮", "蒙皮包裹",
];

const panelTabs: [string, ReactNode][] = [
  ["创建", <path d="M12 2v20M2 12h20" stroke="#b8b8b8" strokeWidth="2.500" />],
  ["修改", <><path d="M4 4h16v16H4z" stroke={T} strokeWidth="1.500" /><path d="M2 2h4v4H2zM18 2h4v4h-4zM2 18h4v4H2zM18 18h4v4h-4z" fill="#444" stroke={T} /><path d="M8 17q1-8 8-10" stroke="#fff" strokeWidth="3" /></>],
  ["层次", <><path d="M5 1h14v7H5z" fill="#aaa" /><path d="M12 8v5M6 18v-5h12v5" stroke={T} strokeWidth="1.800" /><path d="M3 19h5v4H3zM16 19h5v4h-5z" fill={T} /></>],
  ["运动", <><circle cx="9" cy="12" r="8" stroke="#2f837c" strokeWidth="2" /><circle cx="15" cy="12" r="8" fill="#aaa" /></>],
  ["显示", <path d="M2 3h20v13H2zM8 20q4-4 8 0z" fill="#aaa" />],
];

function CommandPanel() {
  return (
    <aside className="flex w-[198px] shrink-0 flex-col bg-[#444] pr-1.5 pl-0.5 text-xs text-[#e0e0e0]">
      <div className="flex h-7 pr-1">
        {panelTabs.map(([name, icon], i) => (
          <button
            key={name}
            type="button"
            aria-label={name}
            className={`mr-0.5 flex flex-1 items-center justify-center rounded-t-sm ${i === 1 ? "bg-[#444]" : "bg-[#3a3a3a]"}`}
          >
            <Ico size={18}>{icon}</Ico>
          </button>
        ))}
        <button type="button" aria-label="实用程序" className="flex flex-1 items-center justify-center bg-[#3a3a3a]">
          <Wrench size={17} className="-scale-x-100 fill-[#aaa] text-[#aaa]" />
        </button>
      </div>
      <div className="mt-[7px] flex gap-1.5 pl-0.5">
        <input aria-label="对象名称" defaultValue="Box001" className="h-[19px] min-w-0 flex-1 bg-[#646464] px-0.5 outline-none" />
        <button type="button" aria-label="对象颜色" className="h-[19px] w-[17px] border border-[#222] bg-[#5c5cd8]" />
      </div>
      <Combo label="修改器列表" value="" className="mt-2.5 ml-0.5 h-[19px] bg-[#646464]" />
      <div className="flex min-h-0 flex-1 overflow-hidden border border-[#0f6ab8] bg-[#646464]">
        <ul className="min-w-0 flex-1 pt-0.5">
          {modifiers.map((m) => (
            <li key={m} className={`h-[17px] pl-[19px] leading-[17px] ${m === "编辑多边形" ? "bg-[#363636] text-white" : ""}`}>
              {m}
            </li>
          ))}
        </ul>
        <div className="flex w-4 flex-col bg-[#f0f0f0] text-[#333]">
          <button type="button" aria-label="向上滚动" className="flex h-5 items-center justify-center">
            <ChevronUp size={13} strokeWidth={3} />
          </button>
          <div className="mt-auto h-[334px] bg-[#cdcdcd]" />
        </div>
      </div>
    </aside>
  );
}

function Coord({ axis, value }: { axis: string; value: string }) {
  return (
    <label className="flex items-center gap-0.5">
      <span className="w-3 text-right">{axis}:</span>
      <span className="flex h-[17px] w-[68px] items-center bg-[#646464]">
        <input defaultValue={value} className="h-full min-w-0 flex-1 bg-transparent pl-0.5 text-[#d0d0d0] outline-none" />
        <svg width="10" height="11" viewBox="0 0 10 11" aria-hidden="true"><path d="M5 0l3 4H2zM5 11l3-4H2z" fill="#e0e0e0" /></svg>
      </span>
    </label>
  );
}

function StatusBar() {
  return (
    <div className="flex h-[50px] bg-[#444] text-[11px] text-[#e8e8e8]">
      <div className="flex w-[105px] shrink-0 flex-col gap-[3px] border-r border-black py-0.5 pr-1 pl-px">
        <input aria-label="宏录制器" className="min-h-0 flex-1 border-2 border-white border-t-[#777] border-l-[#777] bg-[#dcc4c4]" />
        <input
          aria-label="MAXScript 侦听器"
          defaultValue="欢迎使用 MAXScr"
          className="min-h-0 w-full flex-1 border-2 border-white border-t-[#777] border-l-[#777] bg-white px-0.5 font-['Liberation_Mono','Noto_Sans_CJK_SC',monospace] text-[11px] text-black"
        />
      </div>
      <div className="flex flex-1 flex-col justify-between pt-1.5 pb-0.5 pl-1 leading-4">
        <p>选择了 1 个 对象</p>
        <p>单击并拖动以选择并移动对象</p>
      </div>
      <div className="mr-[480px] flex shrink-0 flex-col gap-1 pt-[5px]">
        <div className="flex h-5 items-center gap-[3px]">
          <span className="mr-1 flex w-[70px] items-center justify-between">
            <Ico size={17}>
              <path d="M2 7V2h5M17 2h5v5M22 17v5h-5M7 22H2v-5" stroke={L} strokeWidth="1.800" />
              <path d="M8 7h8v10H8z" fill={T} />
            </Ico>
            <Ico size={17}>
              <path d="M7 11V7q0-5 5-5t5 5v4" stroke={L} strokeWidth="2.500" />
              <path d="M5 11h14v12H5z" fill={L} />
              <path d="M12 14v5" stroke="#333" strokeWidth="2" />
            </Ico>
            <Ico size={17}>
              <path d="M2 2h20v20H2z" stroke={L} strokeWidth="2" />
              <path d="M12 3v18M3 12h18" stroke={L} strokeWidth="2" />
              <circle cx="12" cy="12" r="5" fill="#444" stroke={L} strokeWidth="2.500" />
            </Ico>
          </span>
          <Coord axis="X" value="1351.857m" />
          <Coord axis="Y" value="-3.082mm" />
          <Coord axis="Z" value="1316.489m" />
          <span className="w-20 pl-0.5 whitespace-nowrap">栅格 = 100.0mm</span>
        </div>
        <div className="flex items-center justify-end gap-[5px]">
          <button type="button" aria-label="时间标记" className="flex h-5 w-[21px] items-center justify-center rounded-sm bg-[#5b87c4]">
            <Ico size={15}>
              <path d="M12 2l9 5v10l-9 5-9-5V7zM3 7l9 5 9-5M12 12v10" stroke="#222" strokeWidth="2" fill="#9ab" />
            </Ico>
          </button>
          <span className="w-[78px]">添加时间标记</span>
        </div>
      </div>
    </div>
  );
}

const apps: { name: string; open?: boolean; active?: boolean; icon: ReactNode }[] = [
  { name: "Cortana", icon: <circle cx="12" cy="12" r="6.500" stroke="#fff" strokeWidth="2" /> },
  {
    name: "任务视图",
    icon: <path d="M5 5v2h9V5M5 19v-2h9v2M5 9.500h9v5H5zM18 5v2M18 9v10" stroke="#fff" strokeWidth="1.300" />,
  },
  {
    name: "Edge",
    icon: (
      <>
        <circle cx="12" cy="12" r="11" fill="#1179c9" />
        <path d="M1.500 9Q4 1 12 1q10 1 11 9 0 6-6 6-4-1-2-4 0-5-6-5-5 0-7.500 2z" fill="#3fcf9a" />
        <path d="M1.500 9Q4 1 12 1q4 0 7 3-8-1-11 3-4 0-6.500 2z" fill="#2aa8dc" />
        <path d="M9 9q-3 4 0 8 4 5 11 2-4 5-11 3.500Q3 19 5 13q1-3 4-4z" fill="#0c4f9e" />
      </>
    ),
  },
  {
    name: "文件资源管理器",
    open: true,
    active: true,
    icon: (
      <>
        <path d="M1 3h8l2 2h12v16H1z" fill="#f5c445" />
        <path d="M1 8h22v13H1z" fill="#fcd968" />
        <path d="M6 22v-8h12v8h-4v-4h-4v4z" fill="#3d93dc" />
      </>
    ),
  },
  {
    name: "截图工具",
    icon: (
      <>
        <ellipse cx="11" cy="10" rx="10" ry="8" fill="#b9534b" transform="rotate(-20 11 10)" />
        <ellipse cx="12" cy="8" rx="10" ry="6.500" fill="#f3eeee" transform="rotate(-20 12 8)" />
        <path d="M12 9l7 9M19 10l-5 9" stroke="#3f86bd" strokeWidth="2" />
        <circle cx="13" cy="20" r="2" stroke="#3f86bd" strokeWidth="2" />
        <circle cx="20" cy="19" r="2" stroke="#3f86bd" strokeWidth="2" />
      </>
    ),
  },
  {
    name: "画图",
    open: true,
    icon: (
      <>
        <path d="M2 14Q2 5 12 4t9 8-4 6-5 4Q2 23 2 14z" fill="#b9d9ee" />
        <circle cx="7" cy="12" r="2" fill="#d23b34" />
        <circle cx="11" cy="8" r="2" fill="#e5b823" />
        <circle cx="16" cy="10" r="2" fill="#3da54a" />
        <circle cx="8" cy="17" r="2" fill="#3767c0" />
        <path d="M13 22L20 6" stroke="#d48a29" strokeWidth="2.500" />
        <path d="M18 7l3-7 3 3-3 6z" fill="#b97732" />
      </>
    ),
  },
  {
    name: "Firefox",
    icon: (
      <>
        <path d="M3 6l3 1q2-4 5-6 1 4 5 5l2-2q5 4 5 10 0 9-11 9T1 14q0-5 2-8z" fill="#ff5a2c" />
        <path d="M15 2q8 5 7 13-2 7-9 8 6-4 5-10-1-4-5-6 2-2 2-5z" fill="#ffc52e" />
        <circle cx="11.500" cy="13" r="4.500" fill="#7a42c9" />
        <path d="M4 11q4-3 7 0-3 1-2 4-4 0-5-4z" fill="#ff9a1c" />
      </>
    ),
  },
  {
    name: "看图",
    open: true,
    icon: (
      <>
        <rect x="2" y="1" width="20" height="22" rx="2" fill="#f8f8f8" stroke="#4d76c7" strokeWidth="2.500" />
        <path d="M5 11Q12 11 13 4" stroke="#4b8fd8" strokeWidth="2.500" />
        <path d="M6 19Q17 18 18 6" stroke="#dfa52f" strokeWidth="3.500" />
      </>
    ),
  },
  {
    name: "录屏",
    open: true,
    icon: (
      <>
        <rect x="1" y="0" width="22" height="23" rx="3" fill="#fff" />
        <path d="M9 4q5 0 6 4" stroke="#ef2b6b" strokeWidth="5" strokeLinecap="round" />
        <path d="M15 10q-1 3-4 2" stroke="#35b9ec" strokeWidth="4" strokeLinecap="round" />
        <path d="M4 17l2 3 2-3M6 20v2" stroke="#ef2b6b" strokeWidth="1.500" />
        <rect x="12" y="14" width="12" height="10" rx="2" fill="#69aee6" />
        <path d="M16 16v5M20 16v5" stroke="#fff" strokeWidth="2" />
      </>
    ),
  },
  {
    name: "3ds Max",
    open: true,
    active: true,
    icon: (
      <>
        <path d="M0 0h24v24H0z" fill="#d9f0ec" />
        <path d="M8 5q5-4 8 0t-3 5q5 1 3 6t-9 1" stroke="#0f8d8f" strokeWidth="4" />
        <path d="M13 21h9" stroke="#3a9" strokeWidth="2" />
      </>
    ),
  },
];

function Taskbar() {
  return (
    <footer className="mb-0.5 flex h-[39px] bg-gradient-to-r from-[#1c2826] via-[#33351f] via-25% to-[#3a3826]">
      <button type="button" aria-label="开始" className="flex w-12 shrink-0 items-center justify-center">
        <svg width="16" height="17" viewBox="0 0 16 17" aria-hidden="true">
          <path d="M0 2.500l7-1V8H0zM8 1.300L16 0v8H8zM0 9h7v6.500l-7-1zM8 9h8v8l-8-1.300z" fill="#fff" />
        </svg>
      </button>
      <label className="flex w-[343px] shrink-0 items-center gap-2.5 bg-[#f2f2f2] pl-3 text-[#222]">
        <Search size={17} strokeWidth={1.8} className="-scale-x-100" />
        <input
          aria-label="搜索"
          placeholder="在这里输入你要搜索的内容"
          className="min-w-0 flex-1 bg-transparent text-sm outline-none placeholder:text-[#333]"
        />
      </label>
      <div className="flex w-[492px] shrink-0">
        {apps.map((a) => (
          <div key={a.name} className={`flex flex-1 ${a.active ? "px-0.5" : "px-1"}`}>
            <button
              type="button"
              aria-label={a.name}
              className={`flex flex-1 items-center justify-center border-b-2 ${a.open ? "border-[#76b5e8]" : "border-transparent"} ${
                a.active ? "bg-[#5a5c48]" : ""
              }`}
            >
              <Ico size={24}>{a.icon}</Ico>
            </button>
          </div>
        ))}
      </div>
    </footer>
  );
}

// Site badge that covers the lower right corner of the window
function Badge() {
  return (
    <div className="absolute right-0 bottom-0 z-20 flex h-[238px] w-[475px] items-center bg-[#fefefe] pb-2 pl-[43px]">
      <svg width="128" height="106" viewBox="0 0 128 106" fill="none" className="mt-2 shrink-0" aria-hidden="true">
        <path d="M8 46Q35 4 84 1q42 3 40 34-1 5-5 10 2-33-33-35Q42 8 8 46z" fill="#9ac52c" />
        <path d="M2 55q-3 38 36 48 50 5 78-38l10-20q-4 10-12 19Q86 90 48 85 10 79 2 55z" fill="#123f9a" />
        <path d="M10 63l18-9v26q-11-4-18-17z" fill="#1c49a0" />
        <path d="M38 27l23-11v67H38z" fill="#1f56ae" />
        <path d="M64 20l22 10v16l-11 6v31H64z" fill="#dcdce0" />
        <path d="M75 48l18-8v29q-7 7-18 10z" fill="#1c49a0" />
        <path d="M96 43l15 6q-4 10-15 18z" fill="#dcdce0" />
      </svg>
      <div className="mt-3 text-black">
        <p className="text-[52px] leading-[52px] font-black whitespace-nowrap">土木工程网</p>
        <p className="text-[35px] leading-7 font-medium whitespace-nowrap italic">www.civilcn.com</p>
      </div>
    </div>
  );
}

export default function App() {
  return (
    <div className="relative flex h-screen flex-col overflow-hidden bg-white font-['Noto_Sans','Noto_Sans_CJK_SC',sans-serif]">
      <Header />
      <Toolbar />
      <Ribbon />

      <main className="flex min-h-0 flex-1 bg-[#444]">
        <div className="flex w-[39px] shrink-0 flex-col items-center bg-[#303030] pb-0.5">
          <div className="h-1 w-full border-b border-black bg-[#444]" />
          <button type="button" aria-label="展开" className="mt-auto mb-[11px] flex h-5 w-5 items-center justify-center rounded-sm bg-[#505050]">
            <span className="border-y-4 border-l-[5px] border-y-transparent border-l-[#e0e0e0]" />
          </button>
          <button
            type="button"
            aria-label="视口布局"
            className="grid h-11 w-[35px] grid-cols-2 grid-rows-2 gap-0.5 self-end rounded-sm bg-gradient-to-b from-[#4c6076] to-[#4183dc] px-[3px] py-2"
          >
            {[0, 1, 2, 3].map((i) => <span key={i} className="border border-[#26323f] bg-[#566f8c]" />)}
          </button>
        </div>

        <Explorer />

        <div className="flex min-w-0 flex-1 flex-col">
          <div className="grid min-h-0 flex-1 grid-cols-2 grid-rows-2 gap-1.5 pr-1.5 pl-px">
            <Viewport tags={["[+]", "[顶 ]", "[标准 ]", "[线框 ]"]} at={[232, 127]} axis={[373, 324]} step={16.28}>
              <TopScene />
            </Viewport>
            <Viewport tags={["[+]", "[前 ]", "[标准 ]", "[线框 ]"]} at={[978, 127]} axis={[1236, 399]} step={8.14} active>
              <FrontScene />
            </Viewport>
            <Viewport tags={["[+]", "[左 ]", "[标准 ]", "[线框 ]"]} at={[232, 539]} axis={[624, 731]} step={11.52}>
              <LeftScene />
            </Viewport>
            <Viewport tags={["[+]", "[透视 ]", "[标准 ]", "[默认明暗处理 ]"]} at={[978, 539]}>
              <PerspectiveScene />
            </Viewport>
          </div>
          <div className="flex h-[21px] items-center gap-0.5 pl-0.5 text-xs text-[#d8d8d8]">
            <button type="button" className="h-[17px] w-3.5 rounded-sm bg-[#585858] leading-4">&lt;</button>
            <button type="button" className="h-[17px] w-[123px] rounded-sm bg-[#606060] leading-4">0 / 100</button>
            <button type="button" className="h-[17px] w-3.5 rounded-sm bg-[#585858] leading-4">&gt;</button>
          </div>
          <TimeTrack />
        </div>

        <CommandPanel />
      </main>

      <StatusBar />
      <Taskbar />
      <Badge />
    </div>
  );
}
